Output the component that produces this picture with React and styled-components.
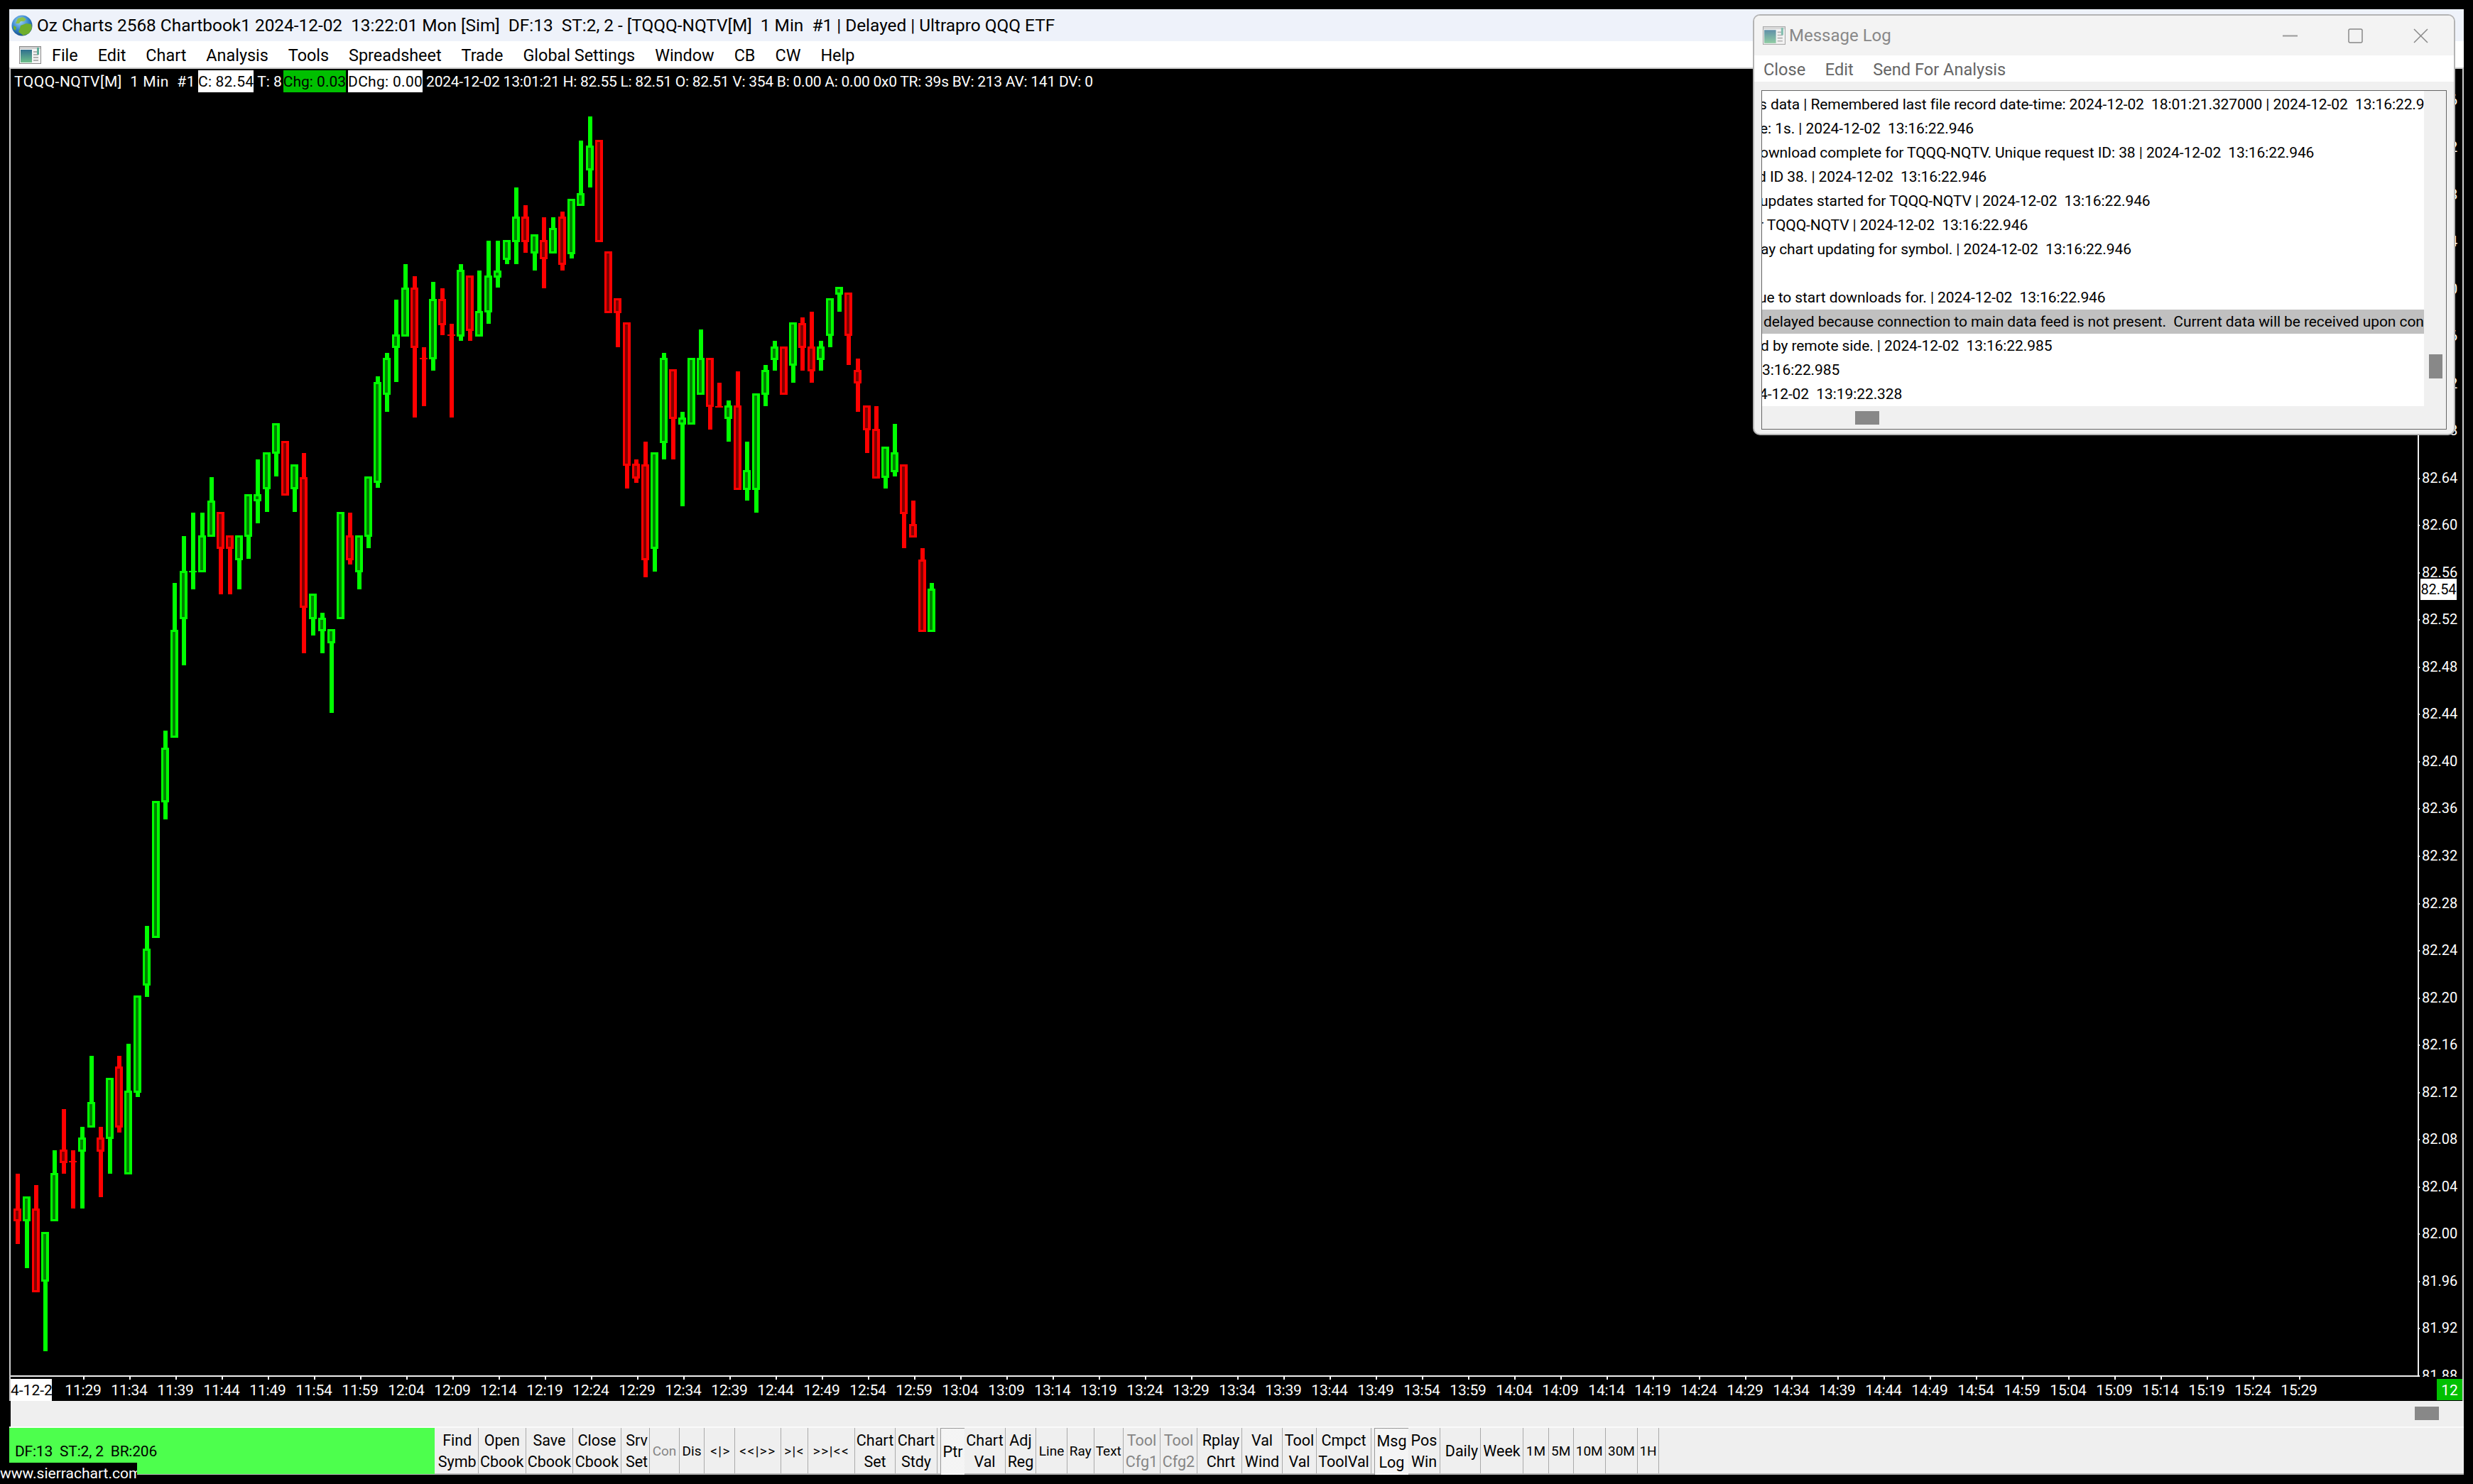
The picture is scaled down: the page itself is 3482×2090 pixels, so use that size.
import styled, {createGlobalStyle} from "styled-components";

const GlobalStyle = createGlobalStyle`
  html, body {
    margin: 0;
    background: #000;
    overflow: hidden;
  }
  * {
    box-sizing: border-box;
  }
`

const UI_FONT = `Roboto, "Noto Sans", sans-serif`;

// [colour, wickTop, bodyTop, bodyBottom, wickBottom] in page pixels, left to right
const BARS = [
    ['r', 1653, 1702, 1720, 1752], ['g', 1685, 1685, 1720, 1786], ['r', 1669, 1702, 1820, 1820], ['g', 1735, 1735, 1805, 1903],
    ['g', 1620, 1652, 1720, 1720], ['r', 1562, 1619, 1638, 1653], ['r', 1620, 1635, 1637, 1702], ['g', 1587, 1602, 1622, 1702],
    ['g', 1487, 1552, 1588, 1588], ['r', 1587, 1602, 1622, 1686], ['g', 1518, 1518, 1604, 1653], ['r', 1487, 1502, 1588, 1595],
    ['g', 1470, 1536, 1654, 1654], ['g', 1402, 1402, 1539, 1545], ['g', 1304, 1336, 1388, 1404], ['g', 1128, 1128, 1321, 1321],
    ['g', 1029, 1053, 1130, 1154], ['g', 821, 887, 1039, 1039], ['g', 755, 804, 872, 937], ['g', 722, 804, 806, 830],
    ['g', 722, 754, 806, 806], ['g', 672, 705, 756, 756], ['r', 721, 721, 773, 837], ['r', 754, 754, 773, 837],
    ['g', 754, 754, 789, 830], ['g', 696, 696, 756, 787], ['g', 647, 696, 706, 737], ['g', 637, 637, 689, 721],
    ['g', 596, 596, 639, 671], ['r', 621, 621, 698, 698], ['g', 654, 654, 689, 721], ['r', 638, 672, 856, 920],
    ['g', 836, 836, 872, 895], ['g', 863, 870, 889, 920], ['g', 886, 886, 906, 1004], ['g', 721, 721, 872, 872],
    ['r', 722, 754, 789, 795], ['g', 754, 754, 806, 830], ['g', 671, 671, 756, 772], ['g', 530, 538, 680, 687],
    ['g', 497, 504, 556, 580], ['g', 422, 471, 490, 538], ['g', 372, 405, 474, 474], ['r', 389, 405, 490, 588],
    ['r', 489, 504, 506, 572], ['g', 397, 421, 506, 522], ['r', 406, 421, 458, 472], ['r', 456, 471, 473, 588],
    ['g', 372, 380, 474, 480], ['r', 388, 388, 466, 480], ['g', 381, 438, 474, 474], ['g', 339, 388, 440, 456],
    ['g', 339, 381, 391, 405], ['g', 338, 338, 366, 372], ['g', 264, 305, 341, 372], ['r', 289, 305, 341, 356],
    ['g', 330, 330, 357, 381], ['r', 306, 338, 365, 406], ['g', 306, 321, 357, 357], ['r', 298, 305, 373, 381],
    ['g', 280, 280, 358, 364], ['g', 198, 272, 290, 290], ['g', 164, 205, 240, 264], ['r', 197, 197, 341, 341],
    ['r', 354, 354, 441, 441], ['r', 420, 420, 441, 489], ['r', 454, 454, 656, 688], ['r', 647, 653, 674, 680],
    ['r', 622, 654, 789, 813], ['g', 637, 637, 773, 805], ['g', 497, 504, 624, 647], ['r', 520, 520, 590, 647],
    ['g', 580, 588, 598, 713], ['g', 504, 504, 598, 598], ['g', 464, 504, 556, 556], ['r', 504, 504, 573, 605],
    ['r', 539, 572, 574, 574], ['g', 564, 571, 590, 622], ['r', 523, 571, 690, 690], ['g', 622, 662, 690, 705],
    ['g', 554, 554, 690, 722], ['g', 514, 521, 556, 572], ['g', 480, 488, 507, 522], ['r', 488, 488, 556, 556],
    ['g', 454, 454, 515, 539], ['r', 447, 455, 490, 522], ['r', 439, 488, 523, 539], ['g', 480, 488, 507, 522],
    ['g', 420, 420, 473, 489], ['g', 404, 404, 415, 439], ['r', 412, 412, 473, 514], ['r', 505, 521, 540, 580],
    ['r', 571, 571, 606, 638], ['r', 572, 604, 674, 674], ['g', 629, 629, 673, 688], ['g', 597, 637, 665, 671],
    ['r', 654, 654, 724, 772], ['r', 705, 738, 757, 757], ['r', 772, 788, 890, 890], ['g', 821, 829, 890, 890],
];

const MENU = ['File', 'Edit', 'Chart', 'Analysis', 'Tools', 'Spreadsheet', 'Trade', 'Global Settings', 'Window', 'CB', 'CW', 'Help'];

const LOG_ROWS = [
    {text: 's data | Remembered last file record date-time: 2024-12-02  18:01:21.327000 | 2024-12-02  13:16:22.946', shift: 4},
    {text: 'e: 1s. | 2024-12-02  13:16:22.946', shift: 3},
    {text: 'ownload complete for TQQQ-NQTV. Unique request ID: 38 | 2024-12-02  13:16:22.946', shift: 3},
    {text: 'd ID 38. | 2024-12-02  13:16:22.946', shift: 6},
    {text: 'updates started for TQQQ-NQTV | 2024-12-02  13:16:22.946', shift: 3},
    {text: 'r TQQQ-NQTV | 2024-12-02  13:16:22.946', shift: 5},
    {text: 'ay chart updating for symbol. | 2024-12-02  13:16:22.946', shift: 2},
    {text: ' ', shift: 0},
    {text: 'ue to start downloads for. | 2024-12-02  13:16:22.946', shift: 5},
    {text: 'delayed because connection to main data feed is not present.  Current data will be received upon connection', shift: -2, active: true},
    {text: 'd by remote side. | 2024-12-02  13:16:22.985', shift: 2},
    {text: '3:16:22.985', shift: 0},
    {text: '4-12-02  13:19:22.328', shift: 4},
];

const BUTTONS = [
    {w: 58.5, top: 'Find', bottom: 'Symb'}, {w: 67.5, top: 'Open', bottom: 'Cbook'}, {w: 66, top: 'Save', bottom: 'Cbook'},
    {w: 68, top: 'Close', bottom: 'Cbook', gap: 4}, {w: 36, top: 'Srv', bottom: 'Set'}, {w: 42, top: 'Con', small: true, dim: true},
    {w: 35, top: 'Dis', small: true, gap: 3}, {w: 40, top: '<|>', small: true, spaced: true}, {w: 65, top: '<<|>>', small: true, spaced: true},
    {w: 38, top: '>|<', small: true, spaced: true}, {w: 66, top: '>>|<<', small: true, spaced: true}, {w: 57, top: 'Chart', bottom: 'Set'},
    {w: 59, top: 'Chart', bottom: 'Stdy', gap: 4}, {w: 34, top: 'Ptr', active: true}, {w: 58, top: 'Chart', bottom: 'Val'},
    {w: 43, top: 'Adj', bottom: 'Reg'}, {w: 44, top: 'Line', small: true}, {w: 37.5, top: 'Ray', small: true},
    {w: 41.5, top: 'Text', small: true}, {w: 52, top: 'Tool', bottom: 'Cfg1', dim: true}, {w: 52, top: 'Tool', bottom: 'Cfg2', dim: true, gap: 4},
    {w: 59, top: 'Rplay', bottom: 'Chrt'}, {w: 57, top: 'Val', bottom: 'Wind'}, {w: 48, top: 'Tool', bottom: 'Val'},
    {w: 77, top: 'Cmpct', bottom: 'ToolVal', gap: 4}, {w: 48, top: 'Msg', bottom: 'Log', active: true}, {w: 45, top: 'Pos', bottom: 'Win', gap: 4},
    {w: 53, top: 'Daily'}, {w: 60, top: 'Week'}, {w: 36, top: '1M', small: true}, {w: 34.5, top: '5M', small: true},
    {w: 45.5, top: '10M', small: true}, {w: 45, top: '30M', small: true}, {w: 30, top: '1H', small: true},
];

const PRICES = Array.from({length: 28}, (_, i) => (82.96 - i * 0.04).toFixed(2));

const TIMES = Array.from({length: 49}, (_, i) => {
    const minutes = 11 * 60 + 29 + i * 5;
    return `${Math.floor(minutes / 60)}:${String(minutes % 60).padStart(2, '0')}`;
});

const Page = styled.div`
  position: relative;
  width: 3482px;
  height: 2090px;
  background: #000;
  padding: 13px 13px 0;
  font-family: ${UI_FONT};
  font-size: 21px;
  overflow: hidden;
`

const Main = styled.div`
  width: 3456px;
  height: 2064px;
  display: flex;
  flex-direction: column;
`

const TitleBar = styled.div`
  height: 45px;
  flex: none;
  display: flex;
  align-items: center;
  gap: 6px;
  padding-left: 3px;
  background: #eef2fa;
  color: #000;
  font-size: 24.4px;
  white-space: pre;
`

const MenuBar = styled.div`
  height: 39px;
  flex: none;
  display: flex;
  align-items: center;
  padding: 1px 0 0 14px;
  background: #fff;
  border-bottom: 2px solid #ccc;
`

const MenuItems = styled.div`
  display: flex;
  gap: 28px;
  margin-left: 15px;
  padding-top: 2px;
  color: #000;
  font-size: 23.4px;
  line-height: 36px;
`

const ChartPane = styled.div`
  height: 1876px;
  flex: none;
  display: flex;
  flex-direction: column;
  background: #000;
  border-left: 2px solid #ccc;
  border-right: 2px solid #ccc;
  color: #fff;
`

const PlotRow = styled.div`
  position: relative;
  height: 1842px;
  flex: none;
  display: flex;
  overflow: hidden;
`

const Plot = styled.div`
  width: 3391px;
  flex: none;
  border-right: 2px solid #eee;
  border-bottom: 2px solid #eee;
`

const InfoLine = styled.div`
  position: absolute;
  top: 2px;
  left: 0;
  height: 31px;
  display: flex;
  align-items: stretch;
  padding-left: 5px;
  white-space: pre;
  line-height: 33px;
`

const InfoCell = styled.span`
  background: ${p => p.$bg || 'transparent'};
  color: ${p => p.$bg ? '#000' : '#fff'};
  margin-right: ${p => p.$mr || 0}px;
  letter-spacing: ${p => p.$ls || 0}px;
`

const PriceAxis = styled.div`
  position: relative;
  flex: 1;
  padding-top: 10.74px;
  font-size: 20px;
`

const PriceLabel = styled.div`
  position: relative;
  height: 66.52px;
  line-height: 66.52px;
  padding-left: 4px;

  &::before {
    content: '';
    position: absolute;
    left: -2px;
    top: 33px;
    width: 3px;
    height: 2px;
    background: #fff;
  }
`

const LastPrice = styled.div`
  position: absolute;
  top: 718px;
  left: 2px;
  width: 51px;
  height: 30px;
  line-height: 30px;
  text-align: center;
  background: #fff;
  color: #000;
`

const TimeAxis = styled.div`
  height: 34px;
  flex: none;
  display: flex;
  padding-top: 3px;
  line-height: 33px;
`

const DateBadge = styled.div`
  width: 58px;
  height: 31px;
  margin-right: 11.5px;
  overflow: hidden;
  background: #fff;
  color: #000;
  white-space: pre;
  text-align: center;
`

const TimeLabel = styled.div`
  position: relative;
  width: 65px;
  text-align: center;
  letter-spacing: -0.2px;

  &::before {
    content: '';
    position: absolute;
    left: 32px;
    top: -3px;
    width: 2px;
    height: 4px;
    background: #fff;
  }
`

const BarCount = styled.div`
  width: 36px;
  margin: 0 0 1px auto;
  background: #00c000;
  color: #fff;
  text-align: center;
`

const ScrollStrip = styled.div`
  height: 36px;
  flex: none;
  display: flex;
  justify-content: flex-end;
  padding: 8px 35px 0 0;
  background: #efefef;
  border-left: 2px solid #000;
`

const Thumb = styled.div`
  width: ${p => p.$w}px;
  height: 19px;
  background: #888;
`

const ButtonBar = styled.div`
  height: 68px;
  flex: none;
  display: flex;
  background: #efefef;
  border-top: 2px solid #fafafa;
  border-bottom: 2px solid #b4b4b4;
`

const StatusPanel = styled.div`
  width: 599px;
  margin-right: 3px;
  height: 65px;
  display: flex;
  align-items: center;
  padding-left: 8px;
  background: #4dff4d;
  color: #000;
  white-space: pre;
  letter-spacing: -0.2px;
`

const ToolButton = styled.div`
  width: ${p => p.$w}px;
  margin-right: ${p => p.$gap || 0}px;
  flex: none;
  display: flex;
  flex-direction: column;
  justify-content: center;
  align-items: center;
  padding-top: 1px;
  border-right: 1.5px solid #aaa;
  color: ${p => p.$dim ? '#858585' : '#000'};
  font-size: ${p => p.$small ? 19 : 21.5}px;
  letter-spacing: ${p => p.$spaced ? 1.5 : 0}px;
  line-height: 30px;
  white-space: pre;
  ${p => p.$active && `
    background: repeating-conic-gradient(#fff 0 25%, #eaeaea 0 50%) 0 0 / 2px 2px;
    border-left: 1.5px solid #999;
    border-top: 1.5px solid #999;
    border-right: none;
    margin-bottom: -2px;
  `}
`

const Desktop = styled.div`
  flex: 1;
  background: linear-gradient(90deg, #e6eff9 0%, #d4e0f7 45%, #d8dff0 62%, #e3edf8 100%);
`

const SiteTag = styled.div`
  position: absolute;
  left: 0;
  bottom: 0;
  width: 193px;
  height: 30px;
  line-height: 30px;
  background: #000;
  color: #fff;
  white-space: nowrap;
  overflow: hidden;
`

const LogWindow = styled.div`
  position: absolute;
  left: 2468px;
  top: 20px;
  width: 989px;
  height: 593px;
  display: flex;
  flex-direction: column;
  background: #f0f0f0;
  border: 2px solid #b4b4b4;
  border-radius: 10px;
  overflow: hidden;
`

const LogTitle = styled.div`
  height: 56px;
  flex: none;
  display: flex;
  align-items: center;
  gap: 5px;
  padding-left: 12px;
  background: #f3f3f3;
  color: #888;
  font-size: 24px;
`

const WindowControls = styled.div`
  display: flex;
  gap: 71px;
  margin-left: auto;
  margin-right: 36px;
  align-items: center;
`

const LogMenu = styled.div`
  height: 37px;
  flex: none;
  display: flex;
  align-items: center;
  gap: 27.5px;
  padding: 2px 0 0 13px;
  background: #fff;
  color: #666;
  font-size: 23.6px;
`

const LogFrame = styled.div`
  flex: 1;
  margin: 12px 10px 9px;
  display: flex;
  flex-direction: column;
  border: 1px solid #666;
`

const LogBody = styled.div`
  flex: 1;
  display: flex;
  min-height: 0;
`

const LogList = styled.div`
  width: 932px;
  flex: none;
  padding-top: 2px;
  background: #fff;
  overflow: hidden;
`

const LogRow = styled.div`
  height: 34px;
  line-height: 34px;
  white-space: pre;
  color: #000;
  letter-spacing: -0.08px;
  background: ${p => p.$active ? '#c0c0c0' : 'transparent'};
`

const LogText = styled.span`
  display: inline-block;
  margin-left: ${p => -p.$shift}px;
`

const VerticalTrack = styled.div`
  flex: 1;
  padding: 371px 0 0 7px;
`

const VerticalThumb = styled.div`
  width: 19px;
  height: 34px;
  background: #888;
`

const HorizontalTrack = styled.div`
  height: 32px;
  flex: none;
  padding: 7px 0 0 131px;
`

const GlobeIcon = () => (
    <svg width="30" height="30" viewBox="0 0 30 30">
        <defs>
            <radialGradient id="ocean" cx="0.4" cy="0.3" r="0.8">
                <stop offset="0" stopColor="#9fd4f5"/>
                <stop offset="0.55" stopColor="#2f7fc9"/>
                <stop offset="1" stopColor="#15406f"/>
            </radialGradient>
        </defs>
        <circle cx="15" cy="15" r="14.5" fill="url(#ocean)"/>
        <path d="M9 5 L16 3 L21 6 L18 9 L13 9 L11 12 L6 12 Z" fill="#8ec24a"/>
        <path d="M13 15 L21 12 L28 13 L29 19 L25 26 L17 29 L10 24 L12 19 Z" fill="#6fae2c"/>
        <path d="M3 15 L7 17 L6 22 L3 20 Z" fill="#6fae2c"/>
    </svg>
);

const DocIcon = ({dim, width = 31, height = 25}) => (
    <svg width={width} height={height} viewBox="0 0 31 25" opacity={dim ? 0.75 : 1}>
        <defs>
            <linearGradient id={dim ? 'docDim' : 'doc'} x1="0" y1="0" x2="0" y2="1">
                <stop offset="0" stopColor="#2f6f8f"/>
                <stop offset="1" stopColor="#6fc08a"/>
            </linearGradient>
        </defs>
        <rect x="0.5" y="0.5" width="30" height="24" fill="#f4f4f4" stroke="#8a8a8a"/>
        <rect x="1" y="1" width="29" height="3" fill="#cfcfcf"/>
        <rect x="2" y="5" width="16" height="18" fill={`url(#${dim ? 'docDim' : 'doc'})`}/>
        <path d="M20 8 H27 M20 12 H27 M20 16 H27 M20 20 H27" stroke="#9a9a9a" strokeWidth="1.5"/>
        <rect x="25" y="2" width="3" height="10" fill="#5fae9a"/>
    </svg>
);

const CandleChart = () => (
    <svg width="3389" height="1840" viewBox="15 97 3389 1840" shapeRendering="crispEdges" style={{display: 'block'}}>
        {BARS.map(([colour, wickTop, bodyTop, bodyBottom, wickBottom], i) => {
            const left = 19 + i * 13;
            const bright = colour === 'g' ? '#00ff00' : '#ff0000';
            const dark = colour === 'g' ? '#008000' : '#800000';
            const bodyHeight = bodyBottom - bodyTop;
            return (
                <g key={i}>
                    <rect x={left + 3} y={wickTop} width="6" height={wickBottom - wickTop} fill={bright}/>
                    <rect x={left} y={bodyTop} width="11" height={bodyHeight} fill={bright}/>
                    {bodyHeight > 7 && (
                        <rect x={left + 3} y={bodyTop + 3} width="4" height={bodyHeight - 6} fill={dark}/>
                    )}
                </g>
            );
        })}
    </svg>
);

const WindowGlyphs = () => (
    <WindowControls>
        <svg width="21" height="21" viewBox="0 0 21 21"><path d="M0 10.5 H21" stroke="#999" strokeWidth="2"/></svg>
        <svg width="21" height="21" viewBox="0 0 21 21"><rect x="1" y="1" width="19" height="19" rx="2" fill="none" stroke="#888" strokeWidth="1.5"/></svg>
        <svg width="21" height="21" viewBox="0 0 21 21"><path d="M1 1 L20 20 M20 1 L1 20" stroke="#888" strokeWidth="1.5"/></svg>
    </WindowControls>
);

const App = () => {
    return (
        <Page>
            <GlobalStyle/>
            <Main>
                <TitleBar>
                    <GlobeIcon/>
                    <span>Oz Charts 2568 Chartbook1 2024-12-02  13:22:01 Mon [Sim]  DF:13  ST:2, 2 - [TQQQ-NQTV[M]  1 Min  #1 | Delayed | Ultrapro QQQ ETF</span>
                </TitleBar>
                <MenuBar>
                    <DocIcon/>
                    <MenuItems>
                        {MENU.map(item => <span key={item}>{item}</span>)}
                    </MenuItems>
                </MenuBar>
                <ChartPane>
                    <PlotRow>
                        <Plot>
                            <CandleChart/>
                        </Plot>
                        <InfoLine>
                            <InfoCell $mr={4} $ls={0.5}>TQQQ-NQTV[M]  1 Min  #1</InfoCell>
                            <InfoCell $bg="#fff" $ls={0.2}>C: 82.54</InfoCell>
                            <InfoCell $mr={2}> T: 8</InfoCell>
                            <InfoCell $bg="#00c000" $mr={3}>Chg: 0.03</InfoCell>
                            <InfoCell $bg="#fff" $mr={5} $ls={0.3}>DChg: 0.00</InfoCell>
                            <InfoCell $ls={-0.25}>2024-12-02 13:01:21 H: 82.55 L: 82.51 O: 82.51 V: 354 B: 0.00 A: 0.00 0x0 TR: 39s BV: 213 AV: 141 DV: 0</InfoCell>
                        </InfoLine>
                        <PriceAxis>
                            {PRICES.map(price => <PriceLabel key={price}>{price}</PriceLabel>)}
                            <LastPrice>82.54</LastPrice>
                        </PriceAxis>
                    </PlotRow>
                    <TimeAxis>
                        <DateBadge>4-12-2</DateBadge>
                        {TIMES.map(time => <TimeLabel key={time}>{time}</TimeLabel>)}
                        <BarCount>12</BarCount>
                    </TimeAxis>
                </ChartPane>
                <ScrollStrip>
                    <Thumb $w={34}/>
                </ScrollStrip>
                <ButtonBar>
                    <StatusPanel>DF:13  ST:2, 2  BR:206</StatusPanel>
                    {BUTTONS.map((button, i) => (
                        <ToolButton key={i} $w={button.w} $gap={button.gap} $small={button.small} $dim={button.dim} $active={button.active} $spaced={button.spaced}>
                            <span>{button.top}</span>
                            {button.bottom && <span>{button.bottom}</span>}
                        </ToolButton>
                    ))}
                </ButtonBar>
                <Desktop/>
            </Main>
            <SiteTag>www.sierrachart.com</SiteTag>
            <LogWindow>
                <LogTitle>
                    <DocIcon dim width={32} height={26}/>
                    <span>Message Log</span>
                    <WindowGlyphs/>
                </LogTitle>
                <LogMenu>
                    <span>Close</span>
                    <span>Edit</span>
                    <span>Send For Analysis</span>
                </LogMenu>
                <LogFrame>
                    <LogBody>
                        <LogList>
                            {LOG_ROWS.map((row, i) => (
                                <LogRow key={i} $active={row.active}>
                                    <LogText $shift={row.shift}>{row.text}</LogText>
                                </LogRow>
                            ))}
                        </LogList>
                        <VerticalTrack>
                            <VerticalThumb/>
                        </VerticalTrack>
                    </LogBody>
                    <HorizontalTrack>
                        <Thumb $w={34}/>
                    </HorizontalTrack>
                </LogFrame>
            </LogWindow>
        </Page>
    );
};

export default App;
